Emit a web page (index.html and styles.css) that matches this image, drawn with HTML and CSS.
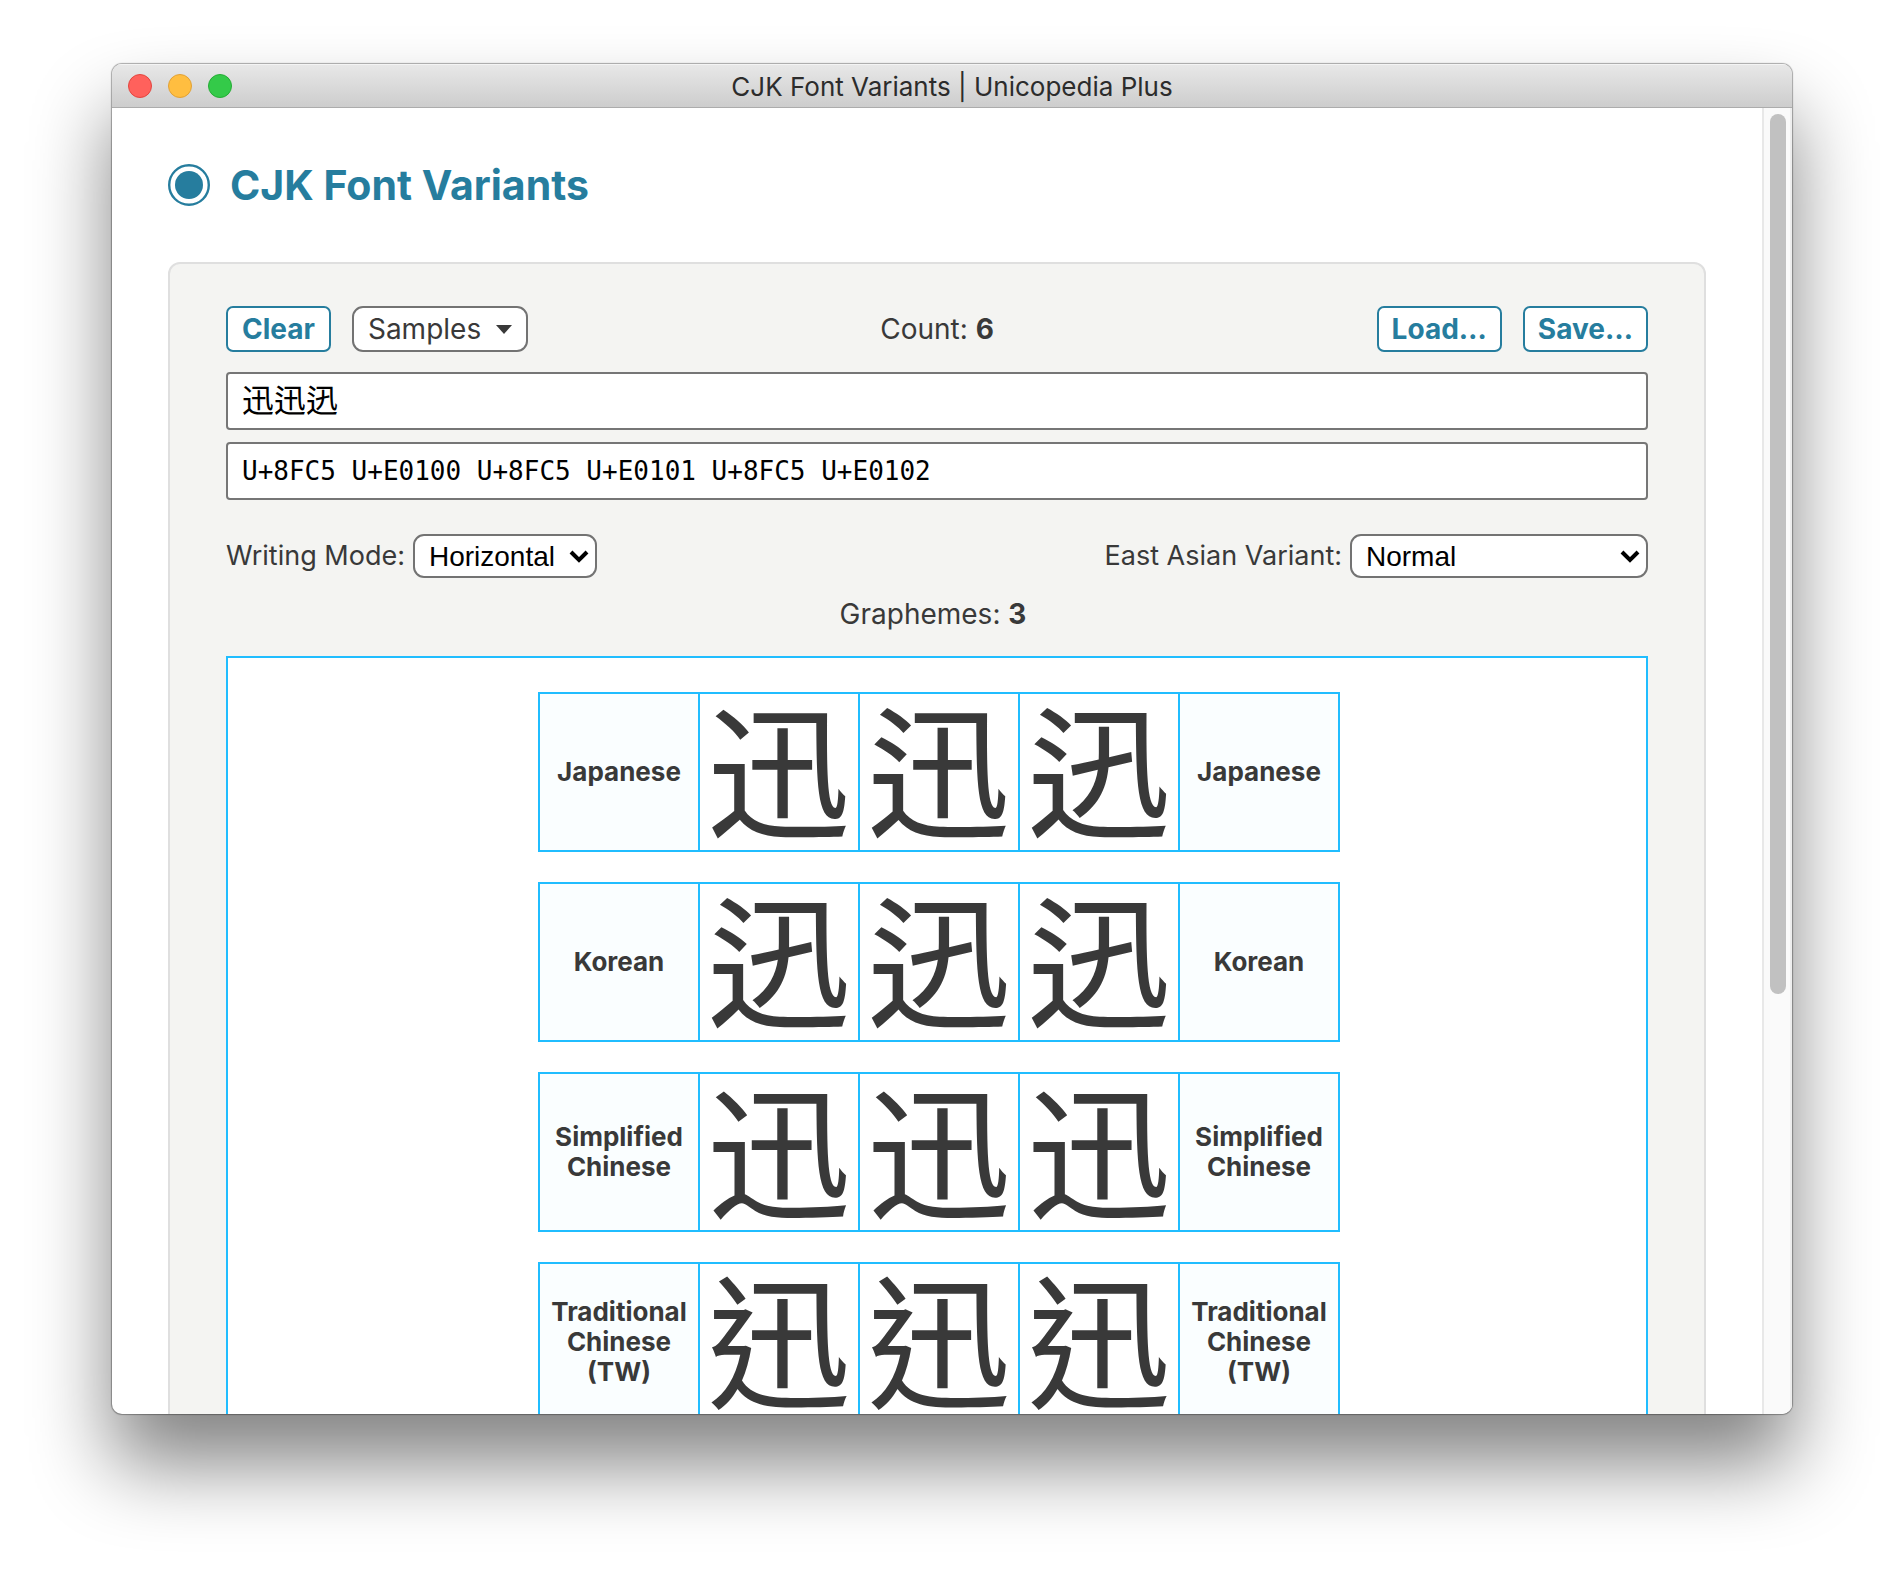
FILE: index.html
```html
<!DOCTYPE html>
<html lang="en">
<head>
<meta charset="utf-8">
<title>CJK Font Variants | Unicopedia Plus</title>
<link rel="stylesheet" href="styles.css">
</head>
<body>
<div class="window">
  <header class="titlebar">
    <div class="lights">
      <button class="light close" aria-label="Close"></button>
      <button class="light minimize" aria-label="Minimize"></button>
      <button class="light zoom" aria-label="Zoom"></button>
    </div>
    <span class="window-title">CJK Font Variants | Unicopedia Plus</span>
  </header>
  <div class="viewport">
    <main class="content">
      <h1 class="heading">
        <svg class="heading-icon" viewBox="0 0 42 42" aria-hidden="true"><circle cx="21" cy="21" r="19.8" fill="none" stroke="currentColor" stroke-width="2.4"/><circle cx="21" cy="21" r="14" fill="currentColor"/></svg>
        CJK Font Variants
      </h1>
      <section class="panel">
        <div class="toolbar">
          <div class="group">
            <button class="button">Clear</button>
            <button class="button menu-button">Samples <svg class="triangle" viewBox="0 0 16 9" aria-hidden="true"><path d="M0 0h16L8 9z" fill="currentColor"/></svg></button>
          </div>
          <p class="info">Count: <strong>6</strong></p>
          <div class="group group-end">
            <button class="button">Load…</button>
            <button class="button">Save…</button>
          </div>
        </div>
        <div class="fields">
          <input class="field characters" type="text" lang="ja" aria-label="Characters" value="迅&#xE0100;迅&#xE0101;迅&#xE0102;">
          <input class="field code-points" type="text" aria-label="Code points" value="U+8FC5 U+E0100 U+8FC5 U+E0101 U+8FC5 U+E0102">
        </div>
        <div class="options">
          <div class="option">
            <label for="mode">Writing Mode:</label>
            <span class="select-box">
              <select id="mode" class="select"><option>Horizontal</option><option>Vertical</option></select>
              <svg class="chevron" viewBox="0 0 20 14" aria-hidden="true"><path d="M2 3l8 8 8-8" fill="none" stroke="currentColor" stroke-width="4"/></svg>
            </span>
          </div>
          <div class="option">
            <label for="variant">East Asian Variant:</label>
            <span class="select-box">
              <select id="variant" class="select select-wide"><option>Normal</option></select>
              <svg class="chevron" viewBox="0 0 20 14" aria-hidden="true"><path d="M2 3l8 8 8-8" fill="none" stroke="currentColor" stroke-width="4"/></svg>
            </span>
          </div>
        </div>
        <p class="info graphemes">Graphemes: <strong>3</strong></p>
        <div class="sheet">
          <table class="variants">
            <tr lang="ja"><th scope="row">Japanese</th><td>迅&#xE0100;</td><td>迅&#xE0101;</td><td>迅&#xE0102;</td><th>Japanese</th></tr>
          </table>
          <table class="variants">
            <tr lang="ko"><th scope="row">Korean</th><td>迅</td><td>迅</td><td>迅</td><th>Korean</th></tr>
          </table>
          <table class="variants">
            <tr lang="zh-Hans"><th scope="row">Simplified Chinese</th><td>迅</td><td>迅</td><td>迅</td><th>Simplified Chinese</th></tr>
          </table>
          <table class="variants">
            <tr lang="zh-Hant"><th scope="row">Traditional Chinese (TW)</th><td>迅</td><td>迅</td><td>迅</td><th>Traditional Chinese (TW)</th></tr>
          </table>
        </div>
      </section>
    </main>
    <div class="scrollbar" aria-hidden="true"><div class="thumb"></div></div>
  </div>
</div>
</body>
</html>
```
FILE: styles.css
```css
* {
  box-sizing: border-box;
}

body {
  margin: 0;
  height: 100vh;
  padding: 64px 112px 160px;
  background: #fff;
  color: #393939;
  font: 28px/34px Inter, "Liberation Sans", sans-serif;
  overflow: hidden;
}

.window {
  display: flex;
  flex-direction: column;
  height: 100%;
  border-radius: 10px;
  background: #fff;
  overflow: hidden;
  box-shadow: 0 0 1px 1px rgba(0, 0, 0, .32), 0 50px 80px rgba(0, 0, 0, .49);
}

.titlebar {
  display: grid;
  grid-template-columns: 1fr auto 1fr;
  align-items: center;
  flex: none;
  height: 44px;
  padding: 0 16px;
  border-bottom: 1px solid #acacac;
  background: linear-gradient(#e8e8e8, #cdcdcd);
  box-shadow: inset 0 1px #f4f4f4;
}

.lights {
  display: flex;
  gap: 16px;
}

.light {
  width: 24px;
  height: 24px;
  padding: 0;
  border: 1px solid;
  border-radius: 50%;
}

.close {
  background: #ff615c;
  border-color: #e2463f;
}

.minimize {
  background: #ffbe40;
  border-color: #e0a136;
}

.zoom {
  background: #34ca49;
  border-color: #25ac35;
}

.window-title {
  padding-top: 2px;
  color: #2c2c2c;
  font-size: 26px;
}

.viewport {
  display: flex;
  flex: 1;
  min-height: 0;
}

.content {
  flex: 1;
  padding: 48px 56px 0;
  overflow: hidden;
}

.heading {
  display: flex;
  align-items: center;
  gap: 20px;
  height: 58px;
  margin: 0 0 48px;
  color: #267d9e;
  font-size: 41px;
  font-weight: 700;
}

.heading-icon {
  width: 42px;
  height: 42px;
}

.panel {
  padding: 42px 56px;
  border: 2px solid #dfdfdf;
  border-radius: 12px;
  background: #f4f4f2;
}

.toolbar {
  display: grid;
  grid-template-columns: 1fr auto 1fr;
  align-items: center;
}

.group {
  display: flex;
  gap: 21px;
}

.group-end {
  justify-content: flex-end;
}

.button {
  display: flex;
  align-items: center;
  height: 46px;
  padding: 0 14px;
  border: 2px solid #267d9e;
  border-radius: 7px;
  background: #fff;
  color: #267d9e;
  font: inherit;
  font-weight: 700;
}

.group-end .button {
  padding: 0 13px;
}

.menu-button {
  gap: 15px;
  border-color: #737373;
  border-radius: 11px;
  color: #393939;
  font-weight: 400;
}

.triangle {
  width: 16px;
  height: 9px;
}

.info {
  margin: 0;
}

.fields {
  display: grid;
  gap: 12px;
  margin-top: 20px;
}

.field {
  width: 100%;
  height: 58px;
  padding: 0 14px;
  border: 2px solid #767676;
  border-radius: 4px;
  background: #fff;
  color: #000;
}

.characters {
  padding-bottom: 7px;
  font: 32px "Noto Sans CJK JP", sans-serif;
}

.code-points {
  font: 26px "DejaVu Sans Mono", monospace;
}

.options {
  display: flex;
  justify-content: space-between;
  margin-top: 34px;
}

.option {
  display: flex;
  align-items: center;
  gap: 8px;
  font-size: 27px;
}

.select-box {
  display: grid;
  align-items: center;
}

.select {
  grid-area: 1 / 1;
  appearance: none;
  width: 184px;
  height: 44px;
  padding: 0 14px;
  border: 2px solid #737373;
  border-radius: 11px;
  background: #fff;
  color: #000;
  font: 28px "Liberation Sans", sans-serif;
}

.select-wide {
  width: 298px;
}

.chevron {
  grid-area: 1 / 1;
  justify-self: end;
  width: 20px;
  height: 14px;
  margin-right: 8px;
  color: #000;
  pointer-events: none;
}

.graphemes {
  margin: 19px 0 25px;
  padding-right: 8px;
  text-align: center;
}

.sheet {
  display: grid;
  justify-content: center;
  gap: 30px;
  padding: 34px 28px 34px 32px;
  border: 2px solid #20bdff;
  background: #fff;
}

.variants {
  width: 802px;
  height: 160px;
  border-collapse: collapse;
  table-layout: fixed;
}

.variants th,
.variants td {
  height: 158px;
  padding: 0;
  border: 2px solid #20bdff;
  text-align: center;
  vertical-align: middle;
}

.variants th {
  background: #fafeff;
  font-size: 26px;
  line-height: 30px;
  font-weight: 700;
}

.variants td {
  padding-bottom: 14px;
  font-size: 144px;
  line-height: 140px;
}

[lang="ja"] td {
  font-family: "Noto Sans CJK JP", sans-serif;
}

[lang="ko"] td {
  font-family: "Noto Sans CJK KR", sans-serif;
}

[lang="zh-Hans"] td {
  font-family: "Noto Sans CJK SC", sans-serif;
}

[lang="zh-Hant"] td {
  font-family: "Noto Sans CJK TC", sans-serif;
}

.scrollbar {
  display: grid;
  grid-template-rows: 17fr 8fr;
  flex: none;
  width: 30px;
  padding: 6px 4px 6px 6px;
  border-left: 2px solid #e8e8e8;
  border-right: 2px solid #eee;
  background: #fafafa;
}

.thumb {
  border-radius: 8px;
  background: #c1c1c1;
}
```
